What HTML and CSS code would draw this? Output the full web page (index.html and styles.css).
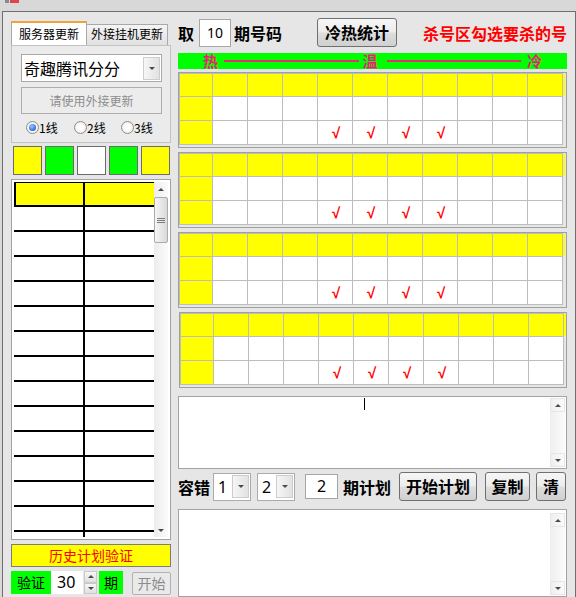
FILE: index.html
```html
<!DOCTYPE html>
<html lang="zh-CN">
<head>
<meta charset="utf-8">
<title>计划</title>
<link rel="stylesheet" href="styles.css">
</head>
<body>
<div class="titlebar">
  <svg class="appicon" width="14" height="4" viewBox="0 0 14 4"><rect x="0" y="0" width="4" height="3" fill="#8a8a8a"/><rect x="5" y="0" width="9" height="3" fill="#e04646"/></svg>
</div>
<div class="window">
  <div class="left">
    <div class="tabs">
      <div class="tab tab-on">服务器更新</div>
      <div class="tab tab-off">外接挂机更新</div>
    </div>
    <div class="tabpage">
      <div class="combo-big">
        <span class="combo-text">奇趣腾讯分分</span>
        <span class="dd dd-big"><span class="tri-down"></span></span>
      </div>
      <div class="btn-disabled">请使用外接更新</div>
      <div class="radios">
        <label class="radio"><span class="rc rc-on"></span>1线</label>
        <label class="radio"><span class="rc"></span>2线</label>
        <label class="radio"><span class="rc"></span>3线</label>
      </div>
    </div>
    <div class="swatches">
      <span class="sw yellow"></span>
      <span class="sw green"></span>
      <span class="sw white"></span>
      <span class="sw green"></span>
      <span class="sw yellow"></span>
    </div>
    <div class="listbox">
      <div class="ltable">
        <div class="lrow lhead"><span></span><span></span></div>
        <div class="lrow"><span></span><span></span></div>
        <div class="lrow"><span></span><span></span></div>
        <div class="lrow"><span></span><span></span></div>
        <div class="lrow"><span></span><span></span></div>
        <div class="lrow"><span></span><span></span></div>
        <div class="lrow"><span></span><span></span></div>
        <div class="lrow"><span></span><span></span></div>
        <div class="lrow"><span></span><span></span></div>
        <div class="lrow"><span></span><span></span></div>
        <div class="lrow"><span></span><span></span></div>
        <div class="lrow"><span></span><span></span></div>
        <div class="lrow"><span></span><span></span></div>
        <div class="lrow"><span></span><span></span></div>
        <div class="lrow"><span></span><span></span></div>
      </div>
      <div class="vscroll">
        <div class="sbtn"><span class="tri-up"></span></div>
        <div class="thumb"><span class="grip"></span></div>
        <div class="strack"></div>
        <div class="sbtn"><span class="tri-down"></span></div>
      </div>
    </div>
    <div class="history">历史计划验证</div>
    <div class="verify">
      <span class="vlabel">验证</span>
      <span class="vinput">30</span>
      <span class="spin"><span><span class="tri-up"></span></span><span><span class="tri-down"></span></span></span>
      <span class="vqi">期</span>
      <span class="vstart">开始</span>
    </div>
  </div>

  <div class="right">
    <div class="toprow">
      <span class="lbl qu">取</span>
      <span class="num-input">10</span>
      <span class="lbl qhm">期号码</span>
      <span class="btn btn-stat">冷热统计</span>
      <span class="lbl red">杀号区勾选要杀的号</span>
    </div>
    <div class="heatbar">
      <span>热</span><span class="hline hline1"></span><span>温</span><span class="hline hline2"></span><span>冷</span>
    </div>

    <div class="block first">
      <div class="grid">
        <span class="y"></span><span class="y"></span><span class="y"></span><span class="y"></span><span class="y"></span><span class="y"></span><span class="y"></span><span class="y"></span><span class="y"></span><span class="y"></span><span class="y"></span>
        <span class="y"></span><span></span><span></span><span></span><span></span><span></span><span></span><span></span><span></span><span></span><span></span>
        <span class="y"></span><span></span><span></span><span></span><span>√</span><span>√</span><span>√</span><span>√</span><span></span><span></span><span></span>
      </div>
    </div>
    <div class="block">
      <div class="grid">
        <span class="y"></span><span class="y"></span><span class="y"></span><span class="y"></span><span class="y"></span><span class="y"></span><span class="y"></span><span class="y"></span><span class="y"></span><span class="y"></span><span class="y"></span>
        <span class="y"></span><span></span><span></span><span></span><span></span><span></span><span></span><span></span><span></span><span></span><span></span>
        <span class="y"></span><span></span><span></span><span></span><span>√</span><span>√</span><span>√</span><span>√</span><span></span><span></span><span></span>
      </div>
    </div>
    <div class="block">
      <div class="grid">
        <span class="y"></span><span class="y"></span><span class="y"></span><span class="y"></span><span class="y"></span><span class="y"></span><span class="y"></span><span class="y"></span><span class="y"></span><span class="y"></span><span class="y"></span>
        <span class="y"></span><span></span><span></span><span></span><span></span><span></span><span></span><span></span><span></span><span></span><span></span>
        <span class="y"></span><span></span><span></span><span></span><span>√</span><span>√</span><span>√</span><span>√</span><span></span><span></span><span></span>
      </div>
    </div>
    <div class="block shift">
      <div class="grid">
        <span class="y"></span><span class="y"></span><span class="y"></span><span class="y"></span><span class="y"></span><span class="y"></span><span class="y"></span><span class="y"></span><span class="y"></span><span class="y"></span><span class="y"></span>
        <span class="y"></span><span></span><span></span><span></span><span></span><span></span><span></span><span></span><span></span><span></span><span></span>
        <span class="y"></span><span></span><span></span><span></span><span>√</span><span>√</span><span>√</span><span>√</span><span></span><span></span><span></span>
      </div>
    </div>

    <div class="textarea ta1">
      <div class="ta-body"><span class="caret"></span></div>
      <div class="tscroll">
        <div class="tsbtn"><span class="tri-up"></span></div>
        <div class="strack"></div>
        <div class="tsbtn"><span class="tri-down"></span></div>
      </div>
    </div>

    <div class="ctrlrow">
      <span class="lbl rc-lbl">容错</span>
      <span class="combo-s c1"><span class="val">1</span><span class="dd dd-s"><span class="tri-down"></span></span></span>
      <span class="combo-s c2"><span class="val">2</span><span class="dd dd-s"><span class="tri-down"></span></span></span>
      <span class="num-input2">2</span>
      <span class="lbl plan-lbl">期计划</span>
      <span class="btn btn-plan">开始计划</span>
      <span class="btn btn-copy">复制</span>
      <span class="btn btn-clear">清</span>
    </div>

    <div class="textarea ta2">
      <div class="ta-body"></div>
      <div class="tscroll">
        <div class="tsbtn"><span class="tri-up"></span></div>
        <div class="strack"></div>
        <div class="tsbtn"><span class="tri-down"></span></div>
      </div>
    </div>
  </div>
</div>
</body>
</html>
```
FILE: styles.css
```css
* { box-sizing: border-box; }
html, body { margin: 0; padding: 0; }
body {
  width: 576px;
  height: 597px;
  overflow: hidden;
  background: #d8d8d8;
  font-family: "Noto Sans CJK SC", "Noto Sans", sans-serif;
  color: #000;
}

.titlebar { height: 11px; padding-left: 5px; }
.appicon { display: block; }

.window {
  display: flex;
  gap: 7px;
  margin-left: 2px;
  width: 574px;
  height: 586px;
  padding: 0 8px;
  border: 1px solid #6f6f6f;
  border-bottom: 0;
  background: #e6e6e6;
}

/* ---------- left column ---------- */
.left {
  width: 160px;
  flex: none;
  padding-top: 9px;
  display: flex;
  flex-direction: column;
}
.tabs { display: flex; align-items: flex-end; height: 24px; }
.tab { font-size: 12px; text-align: center; white-space: nowrap; }
.tab-on {
  width: 76px;
  height: 24px;
  line-height: 22px;
  background: #fff;
  border: 1px solid #a9a9a9;
  border-top: 2px solid #f2a23a;
  border-bottom: 0;
}
.tab-off {
  width: 81px;
  height: 21px;
  line-height: 18px;
  background: linear-gradient(#f4f4f4, #e1e1e1);
  border: 1px solid #a9a9a9;
  border-left: 0;
  border-bottom: 0;
}
.tabpage {
  height: 98px;
  border: 1px solid #c3c3c3;
  background: #ebebeb;
  padding: 8px 0 0 9px;
}
.combo-big {
  width: 141px;
  height: 28px;
  border: 1px solid #a9a9a9;
  background: #fff;
  display: flex;
  align-items: center;
}
.combo-text { flex: 1; font-size: 16px; line-height: 26px; padding-left: 2px; white-space: nowrap; }
.dd {
  display: flex;
  align-items: center;
  justify-content: center;
  border: 1px solid #cdcdcd;
  background: linear-gradient(to right, #f6f6f6, #e2e2e2);
}
.dd-big { width: 17px; height: 23px; margin-right: 1px; }
.tri-down {
  width: 0; height: 0;
  border-left: 3px solid transparent;
  border-right: 3px solid transparent;
  border-top: 3px solid #4a4a4a;
}
.tri-up {
  width: 0; height: 0;
  border-left: 3px solid transparent;
  border-right: 3px solid transparent;
  border-bottom: 3px solid #4a4a4a;
}
.btn-disabled {
  margin-top: 5px;
  width: 141px;
  height: 27px;
  border: 1px solid #adadad;
  background: #ececec;
  color: #8c8c8c;
  font-size: 12px;
  line-height: 25px;
  text-align: center;
}
.radios {
  display: flex;
  align-items: center;
  height: 22px;
  margin-top: 2px;
  padding-left: 5px;
  font-size: 12px;
}
.radio { display: flex; align-items: center; width: 48px; }
.radio + .radio { width: 47px; }
.rc {
  width: 13px;
  height: 13px;
  border-radius: 50%;
  border: 1px solid #8e8e8e;
  background: radial-gradient(circle at 50% 50%, #ffffff 30%, #e2e2e2);
  display: flex;
  align-items: center;
  justify-content: center;
}
.rc-on::after {
  content: "";
  width: 7px;
  height: 7px;
  border-radius: 50%;
  background: radial-gradient(circle at 40% 35%, #9cc8ff, #1d5ed0 80%);
}

.swatches { display: flex; gap: 3px; margin-top: 3px; padding-left: 2px; }
.sw { width: 29px; height: 29px; border: 1px solid #6c6c6c; }
.yellow { background: #ffff00; }
.green { background: #00ff00; }
.white { background: #ffffff; }

.listbox {
  margin-top: 4px;
  height: 361px;
  border: 1px solid #a2a2a2;
  background: #fff;
  padding: 2px;
  display: flex;
}
.ltable { width: 140px; height: 355px; overflow: hidden; }
.lrow { display: flex; height: 25px; flex: none; border-bottom: 2px solid #000; }
.lrow > span:first-child { width: 71px; border-right: 2px solid #000; }
.lrow > span:last-child { flex: 1; }
.lhead { background: #ffff00; border: 2px solid #000; border-right: 0; height: 26px; margin-top: -1px; }
.lhead > span:first-child { width: 69px; }

.vscroll {
  width: 14px;
  display: flex;
  flex-direction: column;
  background: linear-gradient(to right, #ececec, #fbfbfb);
}
.sbtn { height: 14px; flex: none; display: flex; align-items: center; justify-content: center; }
.thumb {
  margin-top: 1px;
  height: 46px;
  flex: none;
  border: 1px solid #ababab;
  border-radius: 2px;
  background: linear-gradient(to right, #f5f5f5, #dadada);
  display: flex;
  align-items: center;
  justify-content: center;
}
.grip {
  width: 8px;
  height: 5px;
  background: repeating-linear-gradient(#7c7c7c 0 1px, transparent 1px 2px);
}
.strack { flex: 1; }

.history {
  margin-top: 4px;
  height: 23px;
  border: 1px solid #7c7c7c;
  background: #ffff00;
  color: #ff0000;
  font-size: 14px;
  line-height: 21px;
  text-align: center;
}
.verify { margin-top: 4px; height: 23px; display: flex; }
.vlabel { width: 40px; background: #00ff00; font-size: 14px; line-height: 23px; text-align: center; }
.vinput {
  width: 32px;
  background: #fff;
  font-family: "Noto Sans", sans-serif;
  font-size: 16px;
  line-height: 23px;
  padding-left: 6px;
}
.spin { width: 13px; margin-left: 1px; display: flex; flex-direction: column; }
.spin > span {
  flex: 1;
  border: 1px solid #c9c9c9;
  background: linear-gradient(#f6f6f6, #e0e0e0);
  display: flex;
  align-items: center;
  justify-content: center;
}
.vqi { width: 24px; margin-left: 2px; background: #00ff00; font-size: 14px; line-height: 23px; text-align: center; }
.vstart {
  width: 39px;
  height: 23px;
  margin-left: 9px;
  margin-top: 1px;
  border: 1px solid #b3b3b3;
  border-radius: 2px;
  background: #e9e9e9;
  color: #8c8c8c;
  font-size: 14px;
  line-height: 21px;
  text-align: center;
}

/* ---------- right column ---------- */
.right {
  width: 389px;
  flex: none;
  padding-top: 6px;
  display: flex;
  flex-direction: column;
}
.toprow { height: 29px; display: flex; align-items: center; font-size: 16px; font-weight: bold; }
.lbl { line-height: 20px; white-space: nowrap; }
.qu { margin-right: 5px; }
.num-input {
  width: 32px;
  height: 28px;
  border: 1px solid #a8a8a8;
  background: #fff;
  font-family: "Noto Sans", sans-serif;
  font-weight: normal;
  font-size: 14px;
  line-height: 26px;
  text-align: center;
  margin-right: 3px;
}
.qhm { margin-right: 35px; }
.btn {
  border: 1px solid #707070;
  border-radius: 3px;
  background: linear-gradient(#f6f6f6 0%, #ececec 48%, #dddddd 52%, #d0d0d0 100%);
  font-weight: bold;
  font-size: 16px;
  text-align: center;
  white-space: nowrap;
}
.btn-stat { width: 80px; height: 29px; line-height: 27px; margin-right: 26px; }
.red { color: #ff0000; }

.heatbar {
  margin-top: 6px;
  height: 16px;
  background: #00ff00;
  display: flex;
  align-items: center;
  padding: 0 25px;
  color: #ea1f74;
  font-size: 15px;
  font-weight: bold;
  line-height: 16px;
}
.hline { flex: 1; height: 2px; background: #ea2a78; }
.hline1 { margin: 0 4px 0 6px; }
.hline2 { margin: 0 6px 0 9px; }

.block {
  margin-top: 4px;
  height: 76px;
  border: 1px solid #a0a0a0;
  padding: 0 3px 2px 0;
  background: linear-gradient(#ffff00, #ffff00) no-repeat 384px 1px / 2px 22px;
}
.block.first { margin-top: 3px; }
.block.shift { margin-left: 1px; }
.grid {
  display: grid;
  grid-template-columns: 33px repeat(10, 35px);
  grid-template-rows: 23px 24px 24px;
  width: 384px;
  border-left: 1px solid #bdbdbd;
  border-top: 1px solid #bdbdbd;
}
.grid > span {
  border-right: 1px solid #bdbdbd;
  border-bottom: 1px solid #bdbdbd;
  background: #fff;
  color: #ff0000;
  font-family: "Liberation Sans", "DejaVu Sans", sans-serif;
  font-weight: bold;
  font-size: 15px;
  line-height: 16px;
  display: flex;
  align-items: center;
  justify-content: center;
  padding-left: 2px;
}
.grid > span.y { background: #ffff00; }

.textarea {
  margin-top: 8px;
  border: 1px solid #a3a3a3;
  background: #fff;
  display: flex;
  padding: 1px 1px 1px 0;
}
.ta1 { height: 73px; }
.ta2 { height: 88px; padding-top: 3px; }
.ta-body { flex: 1; }
.caret { display: block; margin-left: 185px; width: 1px; height: 12px; background: #000; }
.tscroll {
  width: 15px;
  display: flex;
  flex-direction: column;
  background: linear-gradient(to right, #eeeeee, #fbfbfb);
}
.tsbtn {
  height: 14px;
  flex: none;
  border: 1px solid #e6e6e6;
  display: flex;
  align-items: center;
  justify-content: center;
}

.ctrlrow { margin-top: 3px; height: 29px; display: flex; align-items: center; font-size: 16px; font-weight: bold; }
.rc-lbl { margin-right: 3px; }
.combo-s {
  width: 38px;
  height: 28px;
  border: 1px solid #ababab;
  background: #fff;
  display: flex;
  align-items: center;
  font-weight: normal;
}
.c1 { margin-right: 6px; }
.c2 { margin-right: 10px; }
.combo-s .val { flex: 1; font-family: "Noto Sans", sans-serif; font-size: 16px; line-height: 26px; padding-left: 4px; }
.dd-s { width: 17px; height: 23px; margin-right: 1px; }
.num-input2 {
  width: 33px;
  height: 25px;
  border: 1px solid #a5a5a5;
  background: #fff;
  font-family: "Noto Sans", sans-serif;
  font-weight: normal;
  font-size: 16px;
  line-height: 23px;
  text-align: center;
  margin-right: 5px;
}
.plan-lbl { margin-right: 8px; }
.btn-plan { width: 78px; height: 29px; line-height: 27px; margin-right: 8px; }
.btn-copy { width: 45px; height: 29px; line-height: 27px; margin-right: 6px; }
.btn-clear { width: 30px; height: 29px; line-height: 27px; }
```
